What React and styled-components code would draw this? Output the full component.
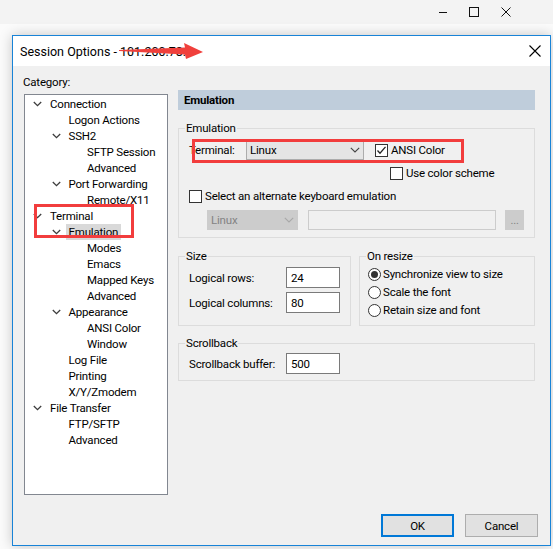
import React from "react";
import styled, { createGlobalStyle } from "styled-components";

const GlobalStyle = createGlobalStyle`
  html, body {
    margin: 0;
    padding: 0;
  }
  body {
    font-family: Roboto, "Liberation Sans", sans-serif;
    font-size: 11.5px;
    letter-spacing: -0.2px;
    color: #000;
    background: #fbfbfb;
  }
`;

const tree = [
  { label: "Connection", level: 0, open: true },
  { label: "Logon Actions", level: 1 },
  { label: "SSH2", level: 1, open: true },
  { label: "SFTP Session", level: 2 },
  { label: "Advanced", level: 2 },
  { label: "Port Forwarding", level: 1, open: true },
  { label: "Remote/X11", level: 2 },
  { label: "Terminal", level: 0, open: true },
  { label: "Emulation", level: 1, open: true, selected: true },
  { label: "Modes", level: 2 },
  { label: "Emacs", level: 2 },
  { label: "Mapped Keys", level: 2 },
  { label: "Advanced", level: 2 },
  { label: "Appearance", level: 1, open: true },
  { label: "ANSI Color", level: 2 },
  { label: "Window", level: 2 },
  { label: "Log File", level: 1 },
  { label: "Printing", level: 1 },
  { label: "X/Y/Zmodem", level: 1 },
  { label: "File Transfer", level: 0, open: true },
  { label: "FTP/SFTP", level: 1 },
  { label: "Advanced", level: 1 },
];

export default function App() {
  return (
    <Window>
      <GlobalStyle />
      <Caption>
        <CaptionButton>
          <svg width="10" height="10" viewBox="0 0 10 10">
            <line x1="2" y1="5.5" x2="10" y2="5.5" stroke="#111" strokeWidth="1" />
          </svg>
        </CaptionButton>
        <CaptionButton>
          <svg width="10" height="10" viewBox="0 0 10 10">
            <rect x="0.5" y="0.5" width="9" height="9" fill="none" stroke="#111" strokeWidth="1" />
          </svg>
        </CaptionButton>
        <CaptionButton>
          <svg width="10" height="10" viewBox="0 0 10 10">
            <path d="M0.5 0.5 L9.5 9.5 M9.5 0.5 L0.5 9.5" stroke="#111" strokeWidth="1" />
          </svg>
        </CaptionButton>
      </Caption>

      <Stage>
        <Dialog>
          <TitleBar>
            <TitleText>Session Options - 101.200.78.6</TitleText>
            <Arrow width="100" height="20" viewBox="0 0 100 20">
              <polygon
                points="0,8 66,5.5 65,1 84,10 67,17 66,12.5 0,9"
                fill="#f0403c"
              />
            </Arrow>
            <CloseButton>
              <svg width="12" height="12" viewBox="0 0 12 12">
                <path d="M0.5 0.5 L11.5 11.5 M11.5 0.5 L0.5 11.5" stroke="#000" strokeWidth="1.1" />
              </svg>
            </CloseButton>
          </TitleBar>

          <Body>
            <LeftColumn>
              <FieldLabel>Category:</FieldLabel>
              <TreeBox>
                {tree.map((item, i) => (
                  <TreeRow key={i} $level={item.level}>
                    <ChevronSlot>
                      {item.open && (
                        <svg width="9" height="6" viewBox="0 0 9 6">
                          <polyline points="0.8,1 4.5,4.6 8.2,1" fill="none" stroke="#3c3c3c" strokeWidth="1.3" />
                        </svg>
                      )}
                    </ChevronSlot>
                    <TreeLabel $selected={item.selected}>{item.label}</TreeLabel>
                  </TreeRow>
                ))}
                <Annotation style={{ left: 9, top: 109, width: 100, height: 34 }} />
              </TreeBox>
            </LeftColumn>

            <RightColumn>
              <PanelHeader>Emulation</PanelHeader>

              <Group $mt={11}>
                <Legend>Emulation</Legend>
                <GroupContent $pad="5px 10px 7px 10px">
                  <FormRow>
                    <RowLabel $w={57}>Terminal:</RowLabel>
                    <Select $w={118}>
                      <span>Linux</span>
                      <Caret />
                    </Select>
                    <CheckItem $ml={11}>
                      <CheckBox checked />
                      <span>ANSI Color</span>
                    </CheckItem>
                  </FormRow>
                  <FormRow $mt={3} $pl={201}>
                    <CheckItem>
                      <CheckBox />
                      <span>Use color scheme</span>
                    </CheckItem>
                  </FormRow>
                  <FormRow $mt={3}>
                    <CheckItem>
                      <CheckBox />
                      <span>Select an alternate keyboard emulation</span>
                    </CheckItem>
                  </FormRow>
                  <FormRow $mt={4} $pl={18}>
                    <Select $w={91} disabled>
                      <span>Linux</span>
                      <Caret disabled />
                    </Select>
                    <TextField $w={190} $ml={10} disabled />
                    <SmallButton disabled>...</SmallButton>
                  </FormRow>
                  <Annotation style={{ left: 13, top: 4, width: 272, height: 24 }} />
                </GroupContent>
              </Group>

              <GroupRow>
                <Group $w={173}>
                  <Legend>Size</Legend>
                  <GroupContent $pad="4px 10px 12px 10px">
                    <FormRow $h={21}>
                      <RowLabel $w={97}>Logical rows:</RowLabel>
                      <TextField $w={54} $h={21} value="24" readOnly />
                    </FormRow>
                    <FormRow $h={21} $mt={4}>
                      <RowLabel $w={97}>Logical columns:</RowLabel>
                      <TextField $w={54} $h={21} value="80" readOnly />
                    </FormRow>
                  </GroupContent>
                </Group>
                <Group $grow>
                  <Legend>On resize</Legend>
                  <GroupContent $pad="2px 8px 6px 8px">
                    <RadioItem>
                      <Radio checked />
                      <span>Synchronize view to size</span>
                    </RadioItem>
                    <RadioItem>
                      <Radio />
                      <span>Scale the font</span>
                    </RadioItem>
                    <RadioItem>
                      <Radio />
                      <span>Retain size and font</span>
                    </RadioItem>
                  </GroupContent>
                </Group>
              </GroupRow>

              <Group $mt={10}>
                <Legend>Scrollback</Legend>
                <GroupContent $pad="3px 10px 6px 10px">
                  <FormRow $h={21}>
                    <RowLabel $w={97}>Scrollback buffer:</RowLabel>
                    <TextField $w={54} $h={21} value="500" readOnly />
                  </FormRow>
                </GroupContent>
              </Group>
            </RightColumn>
          </Body>

          <Footer>
            <Button $default>OK</Button>
            <Button>Cancel</Button>
          </Footer>
        </Dialog>
      </Stage>
    </Window>
  );
}

function CheckBox({ checked }) {
  return (
    <CheckSquare>
      {checked && (
        <svg width="11" height="11" viewBox="0 0 11 11">
          <polyline points="1.5,5.5 4,8.2 9.5,1.8" fill="none" stroke="#222" strokeWidth="1.3" />
        </svg>
      )}
    </CheckSquare>
  );
}

function Radio({ checked }) {
  return <RadioCircle>{checked && <RadioDot />}</RadioCircle>;
}

function Caret({ disabled }) {
  return (
    <CaretBox>
      <svg width="10" height="6" viewBox="0 0 10 6">
        <polyline
          points="0.8,0.8 5,5 9.2,0.8"
          fill="none"
          stroke={disabled ? "#a8a8a8" : "#444"}
          strokeWidth="1.1"
        />
      </svg>
    </CaretBox>
  );
}

const Window = styled.div`
  width: 553px;
  height: 549px;
  overflow: hidden;
  background: #fbfbfb;
`;

const Caption = styled.div`
  height: 24px;
  background: #f3f3f3;
  display: flex;
  justify-content: flex-end;
  padding-right: 31px;
`;

const CaptionButton = styled.div`
  width: 32px;
  height: 24px;
  display: flex;
  align-items: center;
  justify-content: center;
`;

const Stage = styled.div`
  padding: 11px 0 0 12px;
`;

const Dialog = styled.div`
  width: 539px;
  height: 511px;
  box-sizing: border-box;
  border: 1px solid #1883d7;
  background: #f0f0f0;
  box-shadow: 0 0 12px rgba(0, 0, 0, 0.22);
  display: flex;
  flex-direction: column;
`;

const TitleBar = styled.div`
  position: relative;
  height: 30px;
  flex: none;
  background: #fff;
  display: flex;
  align-items: center;
  padding-left: 7px;
`;

const TitleText = styled.div`
  font-size: 12.5px;
  letter-spacing: 0;
  color: #000;
  flex: 1;
`;

const Arrow = styled.svg`
  position: absolute;
  left: 106px;
  top: 6px;
`;

const CloseButton = styled.div`
  width: 30px;
  height: 30px;
  display: flex;
  align-items: center;
  justify-content: center;
`;

const Body = styled.div`
  flex: 1;
  display: grid;
  grid-template-columns: 144px 357px;
  column-gap: 10px;
  align-items: start;
  padding: 8px 0 0 11px;
`;

const LeftColumn = styled.div`
  display: flex;
  flex-direction: column;
`;

const FieldLabel = styled.div`
  height: 16px;
  line-height: 16px;
  margin: 0 0 4px -1px;
`;

const TreeBox = styled.div`
  position: relative;
  height: 401px;
  box-sizing: border-box;
  border: 1px solid #828790;
  background: #fff;
  padding-top: 1px;
  overflow: hidden;
`;

const TreeRow = styled.div`
  height: 16px;
  display: flex;
  align-items: center;
  padding-left: ${(p) => 8 + p.$level * 18.5}px;
`;

const ChevronSlot = styled.div`
  width: 17px;
  flex: none;
  display: flex;
  align-items: center;
`;

const TreeLabel = styled.span`
  line-height: 16px;
  padding: 0 3px;
  margin-left: -3px;
  white-space: nowrap;
  background: ${(p) => (p.$selected ? "#d9d9d9" : "transparent")};
`;

const Annotation = styled.div`
  position: absolute;
  box-sizing: border-box;
  border: 3px solid #f23d3d;
  pointer-events: none;
`;

const RightColumn = styled.div`
  margin-top: 16px;
  display: flex;
  flex-direction: column;
`;

const PanelHeader = styled.div`
  height: 20px;
  line-height: 20px;
  background: #bfcddb;
  font-weight: bold;
  padding-left: 6px;
`;

const Group = styled.fieldset`
  margin: ${(p) => p.$mt || 0}px 0 0 0;
  padding: 0;
  min-width: 0;
  border: 1px solid #dcdcdc;
  width: ${(p) => (p.$w ? `${p.$w}px` : "auto")};
  box-sizing: border-box;
  flex: ${(p) => (p.$grow ? "1" : "none")};
`;

const Legend = styled.legend`
  margin-left: 6px;
  padding: 0 1px;
  line-height: 14px;
  height: 14px;
`;

const GroupContent = styled.div`
  position: relative;
  padding: ${(p) => p.$pad};
`;

const GroupRow = styled.div`
  display: flex;
  gap: 8px;
  margin-top: 11px;
`;

const FormRow = styled.div`
  display: flex;
  align-items: center;
  height: ${(p) => p.$h || 20}px;
  margin-top: ${(p) => p.$mt || 0}px;
  padding-left: ${(p) => p.$pl || 0}px;
`;

const RowLabel = styled.div`
  width: ${(p) => p.$w}px;
  flex: none;
  white-space: nowrap;
`;

const Select = styled.div`
  width: ${(p) => p.$w}px;
  height: 20px;
  box-sizing: border-box;
  flex: none;
  display: flex;
  align-items: center;
  justify-content: space-between;
  padding-left: 3px;
  background: ${(p) => (p.disabled ? "#cccccc" : "#e5e5e5")};
  border: 1px solid ${(p) => (p.disabled ? "#cccccc" : "#acacac")};
  color: ${(p) => (p.disabled ? "#838383" : "#000")};
`;

const CaretBox = styled.div`
  width: 17px;
  display: flex;
  align-items: center;
  justify-content: center;
`;

const CheckItem = styled.label`
  display: flex;
  align-items: center;
  gap: 3px;
  margin-left: ${(p) => p.$ml || 0}px;
  white-space: nowrap;
`;

const CheckSquare = styled.div`
  width: 13px;
  height: 13px;
  box-sizing: border-box;
  border: 1px solid #333;
  background: #fff;
  display: flex;
  align-items: center;
  justify-content: center;
  flex: none;
`;

const TextField = styled.input`
  width: ${(p) => p.$w}px;
  height: ${(p) => p.$h || 20}px;
  box-sizing: border-box;
  margin: 0 0 0 ${(p) => p.$ml || 0}px;
  padding: 0 4px;
  font: inherit;
  letter-spacing: inherit;
  color: #000;
  outline: none;
  background: ${(p) => (p.disabled ? "#f0f0f0" : "#fff")};
  border: 1px solid ${(p) => (p.disabled ? "#cccccc" : "#7a7a7a")};
  border-radius: 0;
`;

const SmallButton = styled.div`
  width: 19px;
  height: 20px;
  box-sizing: border-box;
  margin-left: 9px;
  background: #cccccc;
  border: 1px solid #cccccc;
  color: #838383;
  display: flex;
  align-items: center;
  justify-content: center;
  font-size: 11px;
`;

const RadioItem = styled.label`
  display: flex;
  align-items: center;
  gap: 2px;
  height: 18px;
  white-space: nowrap;
`;

const RadioCircle = styled.div`
  width: 13px;
  height: 13px;
  box-sizing: border-box;
  border-radius: 50%;
  border: 1px solid #333;
  background: #fff;
  display: flex;
  align-items: center;
  justify-content: center;
  flex: none;
`;

const RadioDot = styled.div`
  width: 7px;
  height: 7px;
  border-radius: 50%;
  background: #333;
`;

const Footer = styled.div`
  display: flex;
  justify-content: flex-end;
  gap: 11px;
  padding: 0 12px 8px 0;
`;

const Button = styled.div`
  width: 73px;
  height: 23px;
  box-sizing: border-box;
  display: flex;
  align-items: center;
  justify-content: center;
  background: #e1e1e1;
  border: ${(p) => (p.$default ? "2px solid #0078d7" : "1px solid #adadad")};
`;
